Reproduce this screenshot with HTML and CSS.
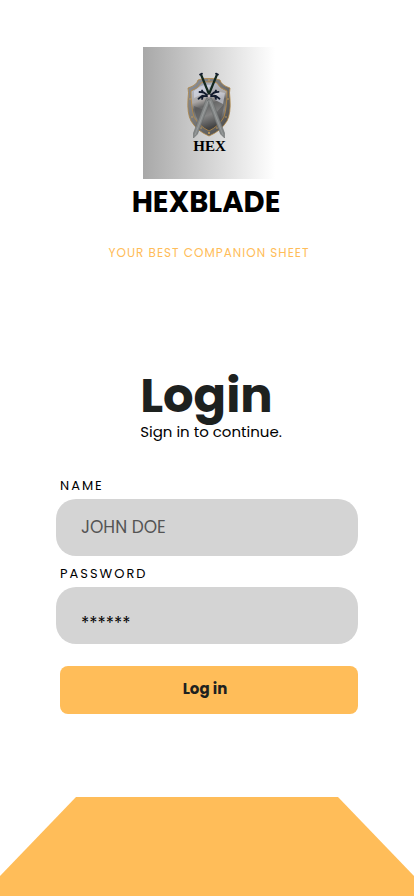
FILE: index.html
```html
<!DOCTYPE html>
<html lang="en">
<head>
<meta charset="utf-8">
<meta name="viewport" content="width=device-width, initial-scale=1">
<title>Hexblade</title>
<link rel="stylesheet" href="styles.css">
</head>
<body>
<main class="page">
  <header class="brand">
    <svg class="logo" viewBox="143 47 132 132" role="img" aria-label="Hex shield with crossed swords">
      <defs>
        <linearGradient id="bg"><stop offset="0" stop-color="#a8a8a8"/><stop offset="1" stop-color="#fff"/></linearGradient>
        <linearGradient id="steel" x1="0" y1="0" x2=".25" y2="1">
          <stop offset="0" stop-color="#747a86"/><stop offset=".2" stop-color="#b3b8c4"/><stop offset=".42" stop-color="#aaa6a4"/><stop offset=".55" stop-color="#686868"/><stop offset=".75" stop-color="#858585"/><stop offset="1" stop-color="#444"/>
        </linearGradient>
        <linearGradient id="rim" x1="0" y1="0" x2="1" y2="1">
          <stop offset="0" stop-color="#8d929c"/><stop offset=".45" stop-color="#777"/><stop offset="1" stop-color="#454545"/>
        </linearGradient>
      </defs>
      <path fill="url(#bg)" d="M143 47h132v132H143z"/>
      <path fill="url(#rim)" stroke="#b08543" stroke-width=".8" d="M209 78.500Q203 78 198 80Q197 85 188 88Q189 92 188 99Q187 113 191 121Q197 131 209 136Q221 131 227 121Q231 113 230 99Q229 92 230 88Q221 85 220 80Q215 78 209 78.500Z"/>
      <path fill="url(#steel)" stroke="#b98a42" stroke-width=".8" d="M209 82Q204 81 201 83Q199 88 191 91Q191 107 194 117Q199 126 209 131Q219 126 224 117Q227 107 227 91Q219 88 217 83Q214 81 209 82Z"/>
      <path fill="#d8dcea" opacity=".6" d="M198 88Q203 84 211 85L205 93 194 98V91ZM215 91l10 2-2 11-8-4Z"/>
      <path fill="#4c4c4d" opacity=".5" d="M194 106l10 4-4 13q-5-6-6-17Zm30-2-8 9 3 9q4-7 5-18Z"/>
      <g fill="#d9aa59"><circle cx="209" cy="80" r=".8"/><circle cx="190" cy="99" r=".7"/><circle cx="228" cy="99" r=".7"/><circle cx="192" cy="117" r=".7"/><circle cx="226" cy="117" r=".7"/><circle cx="201" cy="128" r=".7"/><circle cx="217" cy="128" r=".7"/><circle cx="209" cy="133" r=".9"/></g>
      <g fill="#858888" stroke="#606464" stroke-width=".5">
        <path d="M206.500 98l4 2-13 34-4 4v-5Z"/>
        <path d="M211.500 98l-4 2 13 34 4 4v-5Z"/>
      </g>
      <path stroke="#a5a8a8" stroke-width=".6" fill="none" d="M208 101l-13 34m15-34 13 34"/>
      <path stroke="#14281f" stroke-width="2.200" fill="none" d="M201 74.500l9 22m7-22-9 22"/>
      <path stroke="#121b2d" stroke-width="1.800" stroke-linecap="round" stroke-linejoin="round" fill="none" d="M200 74.500l2-.8m14 0 2 .8M199.500 92l4 .3 5 4-6-.5-4 3m20-7-4 .5-5 4 6-.5 4 3M202 90.500l1 2m13-2-1 2M203 96l-1 3m13-3 1 3"/>
      <circle cx="209" cy="96" r="1.400" fill="#cdbfc3"/>
      <text class="logo-text" x="209.500" y="150.500" text-anchor="middle">HEX</text>
    </svg>
    <h1 class="title">HEXBLADE</h1>
    <p class="tagline">YOUR BEST COMPANION SHEET</p>
  </header>

  <section class="intro">
    <h2 class="heading">Login</h2>
    <p class="subtitle">Sign in to continue.</p>
  </section>

  <form class="form">
    <label class="label" for="name">NAME</label>
    <input class="field" id="name" type="text" placeholder="JOHN DOE" autocomplete="username">
    <label class="label" for="password">PASSWORD</label>
    <input class="field field-password" id="password" type="password" placeholder="******" autocomplete="current-password">
    <button class="submit" type="submit">Log in</button>
  </form>

  <svg class="footer-shape" viewBox="0 0 414 99" preserveAspectRatio="none" aria-hidden="true"><path fill="#ffbd59" d="M76 0H338L414 79V99H0V79Z"/></svg>
</main>
</body>
</html>
```
FILE: styles.css
```css
* {
  box-sizing: border-box;
}

body {
  margin: 0;
  background: #fff;
  color: #000;
  font-family: Poppins, Inter, sans-serif;
}

h1,
h2,
p {
  margin: 0;
}

.page {
  display: flex;
  flex-direction: column;
  min-height: 100vh;
  padding-top: 47px;
}

.brand {
  display: flex;
  flex-direction: column;
  align-items: center;
  padding-left: 4px;
}

.logo {
  display: block;
  width: 132px;
  height: 132px;
}

.logo-text {
  font: bold 15px "Liberation Serif", serif;
}

.title {
  margin: 4px 6px 0 0;
  font-size: 29px;
  font-weight: 700;
  line-height: 38px;
}

.tagline {
  margin-top: 24px;
  color: #ffbd59;
  font-size: 12px;
  line-height: 16px;
  letter-spacing: 1px;
}

.intro {
  align-self: center;
  margin-top: 108px;
  padding-left: 8px;
}

.heading {
  color: #1d211f;
  font-size: 48px;
  font-weight: 700;
  line-height: 54px;
}

.subtitle {
  font-size: 15px;
  line-height: 18px;
}

.form {
  display: flex;
  flex-direction: column;
  padding: 37px 56px 0;
}

.label {
  padding: 0 4px;
  font-size: 13px;
  line-height: 16px;
  letter-spacing: 2px;
}

.field {
  width: 100%;
  height: 57px;
  margin: 5px 0 10px;
  padding: 0 25px 2px;
  border: 0;
  border-radius: 20px;
  background: #d4d4d4;
  color: #000;
  font: inherit;
  font-size: 17px;
}

.field::placeholder {
  color: #545454;
  opacity: 1;
}

.field-password {
  padding-top: 16px;
}

.field-password::placeholder {
  color: #000;
}

.submit {
  height: 48px;
  margin: 12px 0 0 4px;
  padding: 0 8px 4px 0;
  border: 0;
  border-radius: 8px;
  background: #ffbd59;
  color: #1d211f;
  font: inherit;
  font-size: 15px;
  font-weight: 700;
}

.footer-shape {
  display: block;
  width: 100%;
  height: 99px;
  margin-top: auto;
}
```
